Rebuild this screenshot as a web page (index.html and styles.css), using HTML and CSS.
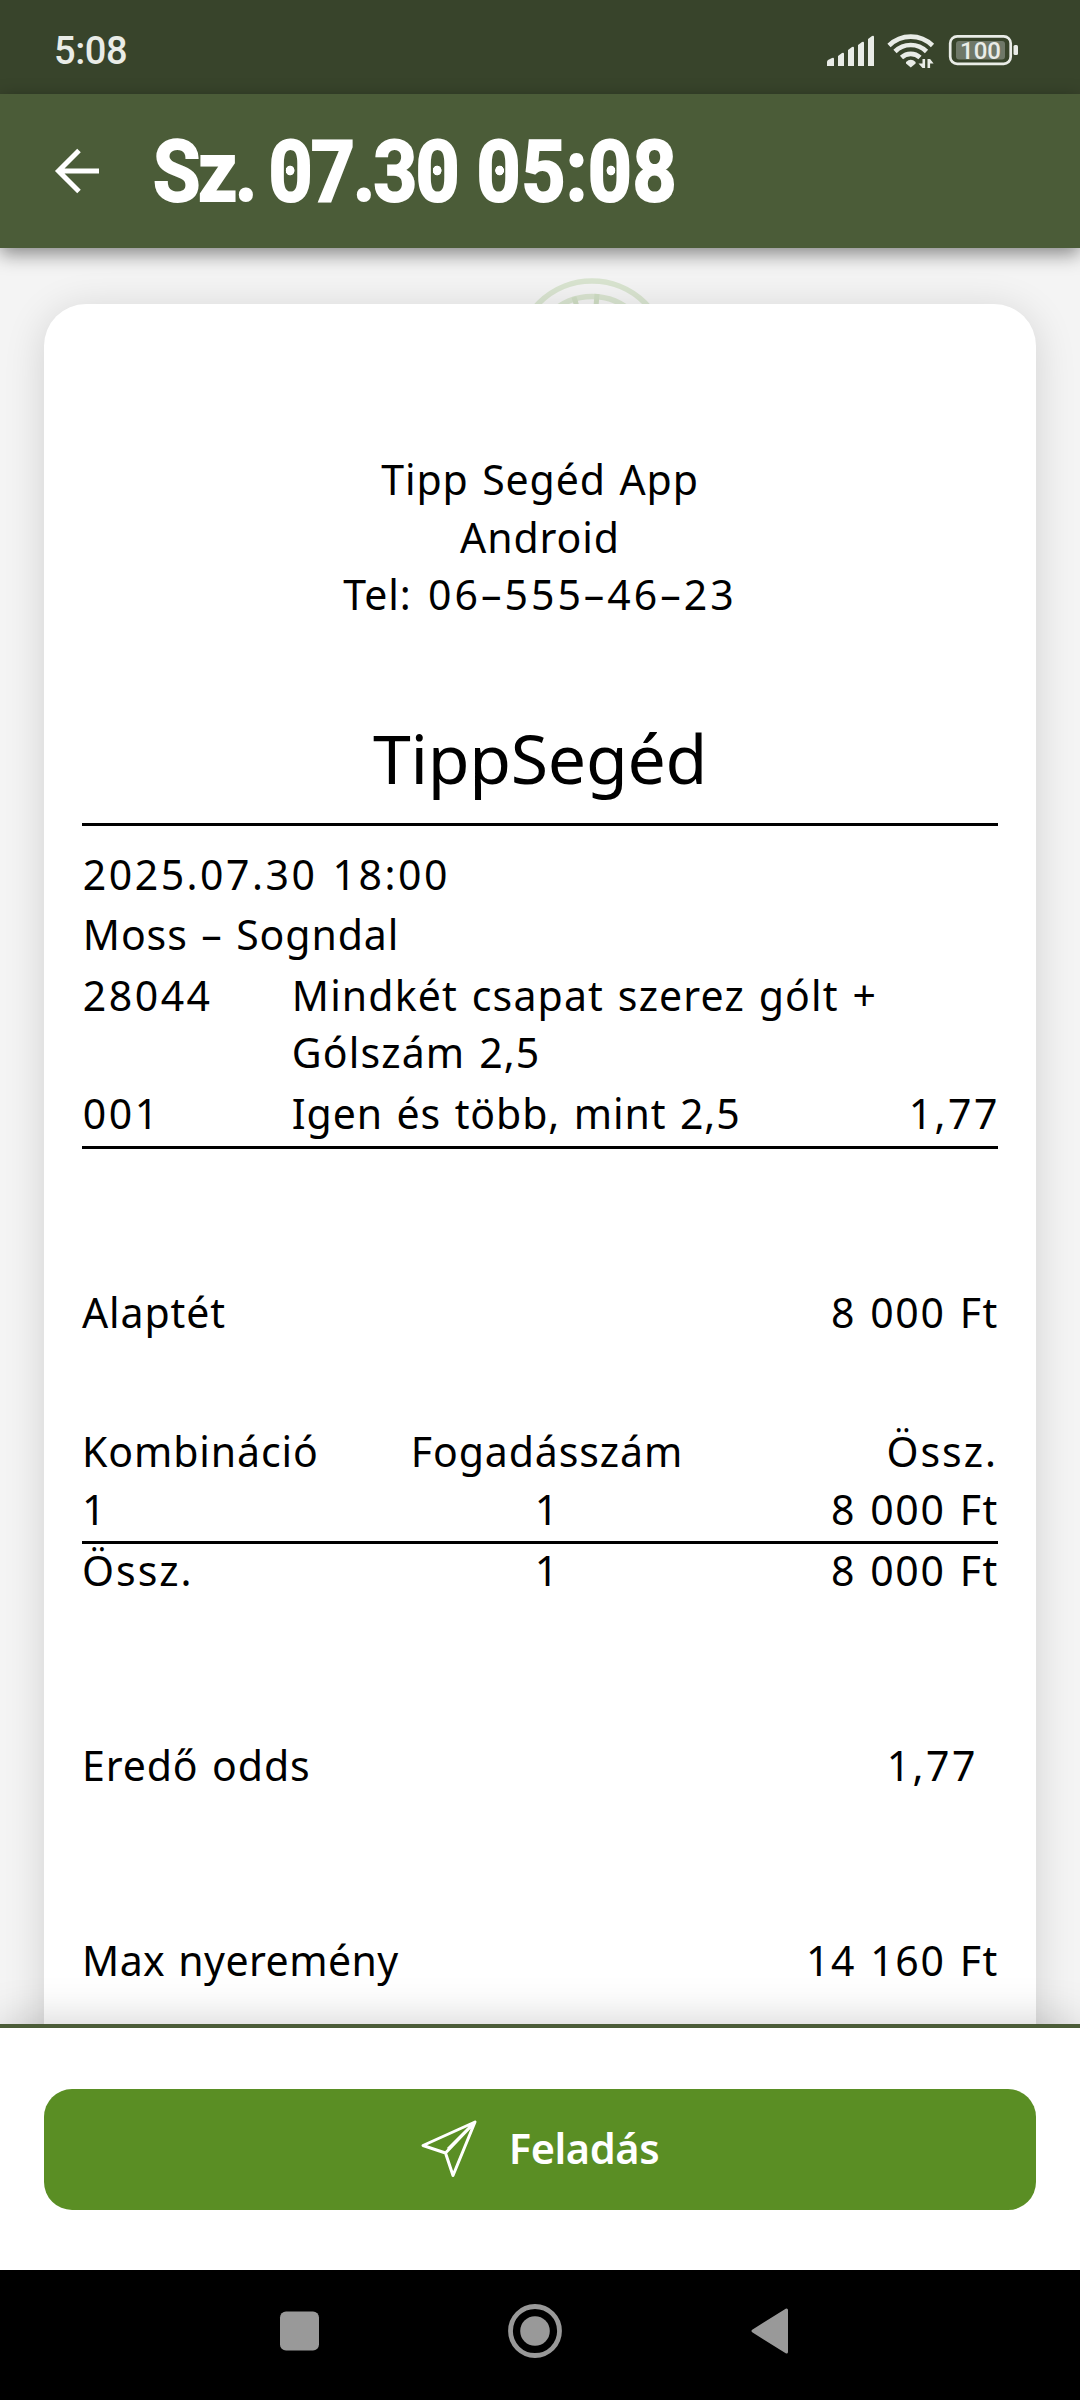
FILE: index.html
```html
<!DOCTYPE html>
<html lang="hu">
<head>
    <meta charset="UTF-8">
    <meta name="viewport" content="width=device-width, initial-scale=1.0">
    <title>Tipp Segéd</title>
    <link rel="stylesheet" href="styles.css">
</head>
<body>
    <div class="screen">
        <div class="status">
            <span class="clock">5:08</span>
            <svg class="status-icons" width="194" height="40" viewBox="825 30 194 40" fill="#e9ece7">
                <!-- signal -->
                <path d="M827 66v-4q0-1 1-2l4-2q2-1 2 1v7zM838 66v-10l4-3q2-1 2 1v12zM848 66v-16l4-3q2-1 2 1v18zM858 66v-21l4-3q2-1 2 1v23zM868 66v-27l4-3q2-1 2 1v29z"/>
                <!-- wifi -->
                <g fill="none" stroke="#e9ece7" stroke-width="4.6">
                    <path d="M889 45.500a31 31 0 0 1 43.500 0"/>
                    <path d="M895 51.500a22.500 22.500 0 0 1 31.500 0"/>
                    <path d="M901.500 57.500a13.500 13.500 0 0 1 18.500 0"/>
                </g>
                <path d="M906 62q4.800-4.500 9.600 0v1.500l-4.800 4-4.800-4z"/>
                <path d="M922.500 59h2.600v9h-2.600l-4-4.500h4zM927.500 68v-9h2.600l3.500 4.500h-3.500v4.500z"/>
                <!-- battery -->
                <rect x="950.200" y="36.300" width="60.500" height="27.500" rx="7" fill="none" stroke="#e9ece7" stroke-width="2.700"/>
                <rect x="956" y="41" width="49" height="18.500" rx="3" fill="#6f7868"/>
                <rect x="1013.500" y="45" width="4.500" height="10" rx="1.500"/>
                <text class="battery-text" x="980.500" y="59">100</text>
            </svg>
        </div>

        <div class="header">
            <svg class="back" width="46" height="46" viewBox="0 0 46 46" fill="none" stroke="#fff" stroke-width="5">
                <path d="M25 2.500L4.500 23 25 43.500M4 23h41"/>
            </svg>
            <h1 class="title">
                <span class="word word-day">Sz.</span>
                <span class="word word-date"><span class="zero">0</span>7.3<span class="zero">0</span></span>
                <span class="word"><span class="zero">0</span>5:<span class="zero">0</span>8</span>
            </h1>
        </div>

        <div class="content">
            <svg class="watermark" width="160" height="160" viewBox="0 0 160 160" fill="none" stroke="#d9e4d0">
                <circle cx="80" cy="80" r="75" stroke-width="5.500"/>
                <circle cx="80" cy="80" r="59.500" stroke-width="5.500"/>
                <path d="M80 80L62 21M80 80l5-62M80 80l40-50" stroke="#cfddc4" stroke-width="5"/>
            </svg>

            <div class="ticket">
                <div class="shop">
                    <div>Tipp Segéd App</div>
                    <div>Android</div>
                    <div class="tel">Tel: <span class="phone">06–555–46–23</span></div>
                </div>
                <div class="brand">TippSegéd</div>

                <div class="event">
                    <div class="row num">2025.07.30 18:00</div>
                    <div class="row">Moss – Sogndal</div>
                    <div class="row market">
                        <span class="num">28044</span>
                        <span class="market-name">Mindkét csapat szerez gólt +<br>Gólszám 2,5</span>
                    </div>
                    <div class="row market">
                        <span class="num">001</span>
                        <span>Igen és több, mint 2,5</span>
                        <span class="num odds">1,77</span>
                    </div>
                </div>

                <div class="pair stake">
                    <span>Alaptét</span>
                    <span class="sum">8 000 Ft</span>
                </div>

                <div class="combos">
                    <div class="combo">
                        <span>Kombináció</span>
                        <span class="count">Fogadásszám</span>
                        <span class="total">Össz.</span>
                    </div>
                    <div class="combo">
                        <span>1</span>
                        <span class="count">1</span>
                        <span class="sum">8 000 Ft</span>
                    </div>
                </div>
                <div class="combo combo-sum">
                    <span class="total">Össz.</span>
                    <span class="count">1</span>
                    <span class="sum">8 000 Ft</span>
                </div>

                <div class="pair result">
                    <span>Eredő odds</span>
                    <span class="num result-odds">1,77</span>
                </div>
                <div class="pair prize">
                    <span class="prize-name">Max nyeremény</span>
                    <span class="sum">14 160 Ft</span>
                </div>
            </div>
        </div>

        <div class="bottom">
            <button class="send">
                <svg width="56" height="58" viewBox="0 0 56 58" fill="none" stroke="#fff" stroke-width="3" stroke-linejoin="round">
                    <path d="M54 2L2 25.500 24.500 33 32 55.500zM54 2L24.500 33M54 2L27 29"/>
                </svg>
                <span class="send-text">Feladás</span>
            </button>
        </div>

        <div class="nav">
            <svg width="1080" height="130" viewBox="0 0 1080 130" fill="#999">
                <rect x="280" y="41.500" width="39" height="39" rx="6"/>
                <circle cx="535" cy="61" r="24.500" fill="none" stroke="#999" stroke-width="4.800"/>
                <circle cx="535" cy="61" r="14.800"/>
                <path d="M753 61L786.500 40v42z" stroke="#999" stroke-width="3" stroke-linejoin="round"/>
            </svg>
        </div>
    </div>
</body>
</html>
```

FILE: styles.css
```css
* {
    margin: 0;
    padding: 0;
    box-sizing: border-box;
}

body {
    background: #000;
}

.screen {
    width: 1080px;
    height: 2400px;
    display: flex;
    flex-direction: column;
    overflow: hidden;
    font-family: "Noto Sans", "Open Sans", sans-serif;
}

/* status bar */
.status {
    height: 94px;
    flex: none;
    display: flex;
    align-items: center;
    justify-content: space-between;
    padding: 6px 61px 0 54px;
    background: #38442b;
}

.clock {
    font: 500 38px Roboto, sans-serif;
    letter-spacing: -0.4px;
    color: #e9ece7;
    padding-top: 2px;
}

.battery-text {
    font: 500 24px Roboto, sans-serif;
    text-anchor: middle;
}

/* header */
.header {
    height: 154px;
    flex: none;
    display: flex;
    align-items: center;
    padding: 0 0 0 54px;
    background: #4b5c38;
    box-shadow: 0 6px 18px rgba(0, 0, 0, 0.45);
    position: relative;
    z-index: 2;
}

.title {
    display: flex;
    margin-left: 53px;
    padding-top: 2px;
    font: 700 85px Roboto, sans-serif;
    color: #fff;
    -webkit-text-stroke: 2px #fff;
    stroke-linejoin: round;
    transform: scaleX(0.905);
    transform-origin: left center;
}

.word {
    margin-right: 21px;
    letter-spacing: 0.500px;
}

.word-day {
    letter-spacing: -2.500px;
    margin-right: 15px;
}

.word-date {
    letter-spacing: -2.2px;
}

.zero {
    background: radial-gradient(circle at calc(50% + 0.5px) 48.5%, #fff 4.5px, transparent 5.2px);
}

/* ticket */
.content {
    height: 1776px;
    flex: none;
    padding: 56px 44px 0;
    background: #f4f4f4;
    position: relative;
    overflow: hidden;
}

.watermark {
    position: absolute;
    left: 512px;
    top: 28px;
}

.ticket {
    position: relative;
    height: 1800px;
    padding: 147px 38px 0;
    border-radius: 42px;
    background: #fff;
    box-shadow: 0 6px 42px rgba(0, 0, 0, 0.14);
    font-size: 41px;
    line-height: 57.600px;
    letter-spacing: 0.900px;
    word-spacing: 2px;
    color: #000;
}

.shop {
    text-align: center;
}

.tel {
    word-spacing: 5px;
}

.phone {
    letter-spacing: 3px;
}

.brand {
    margin-top: 89px;
    padding-bottom: 20.600px;
    border-bottom: 3px solid #000;
    font-size: 68px;
    line-height: 90px;
    letter-spacing: -0.300px;
    text-align: center;
}

.event {
    padding: 19.200px 0 3.200px;
    border-bottom: 3px solid #000;
}

.row {
    margin-bottom: 3px;
    padding-left: 0.800px;
    white-space: nowrap;
}

.row:last-child {
    margin-bottom: 0;
}

.num {
    letter-spacing: 2.500px;
}

.market {
    display: grid;
    grid-template-columns: 209px 1fr auto;
}

.market-name {
    letter-spacing: 1.150px;
}

.odds {
    margin-right: -2px;
}

.pair {
    display: flex;
    justify-content: space-between;
}

.sum {
    letter-spacing: 1.600px;
    text-align: right;
    margin-right: -1px;
}

.total {
    letter-spacing: 2px;
}

.stake {
    margin-top: 135px;
}

.combos {
    margin-top: 82px;
    padding-bottom: 2.700px;
    border-bottom: 3px solid #000;
}

.combo {
    display: grid;
    grid-template-columns: 246px 438px 1fr;
}

.combo .total:last-child {
    text-align: right;
}

.combo-sum {
    line-height: 50px;
    padding-top: 1px;
}

.count {
    text-align: center;
}

.result {
    margin-top: 142px;
}

.result-odds {
    margin-right: 20px;
}

.prize {
    margin-top: 137px;
}

.prize-name {
    letter-spacing: 0.450px;
}

/* bottom bar */
.bottom {
    height: 246px;
    flex: none;
    padding: 60.500px 44px 0;
    background: #fff;
    border-top: 4px solid #4b5c38;
    box-shadow: 0 0 44px rgba(0, 0, 0, 0.2);
    position: relative;
    z-index: 2;
}

.send {
    width: 100%;
    height: 121px;
    display: flex;
    align-items: center;
    justify-content: center;
    gap: 32px;
    border: none;
    border-radius: 28px;
    background: #5a8e24;
    font: 600 41.500px "Noto Sans", sans-serif;
    letter-spacing: -0.400px;
    color: #fff;
}

.send-text {
    padding-bottom: 3px;
}

.nav {
    height: 130px;
    flex: none;
    background: #000;
    position: relative;
    z-index: 3;
}
```
